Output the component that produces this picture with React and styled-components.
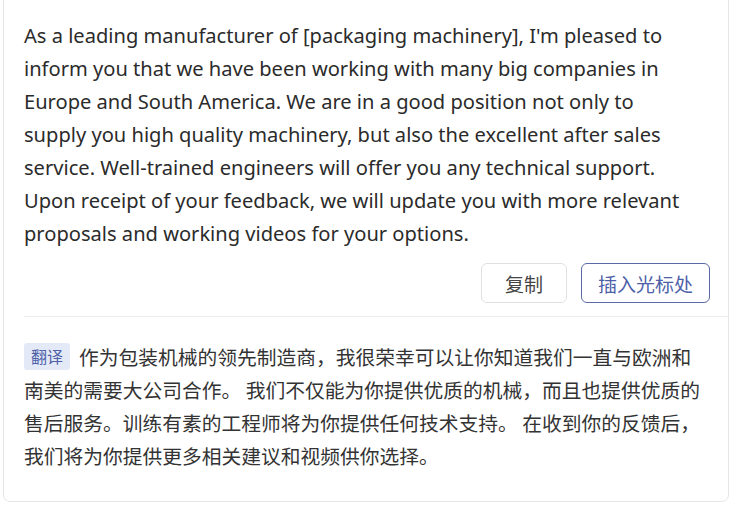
import styled, { createGlobalStyle } from "styled-components";

const GlobalStyle = createGlobalStyle`
  html, body {
    margin: 0;
    padding: 0;
    background: #fff;
  }
  body {
    font-family: "Noto Sans", "Noto Sans CJK SC", sans-serif;
    color: #2f2f2f;
  }
`;

const Card = styled.div`
  margin: -8px 0 0 3px;
  width: 726px;
  height: 510px;
  box-sizing: border-box;
  border: 1px solid #e6e6e6;
  border-radius: 7px;
  background: #fff;
  overflow: hidden;
`;

const Source = styled.div`
  padding: 26px 19px 0 20px;
  font-size: 20.1px;
  line-height: 33px;
  color: #2b2b2b;
`;

const Line = styled.div`
  white-space: nowrap;
`;

const Actions = styled.div`
  display: flex;
  justify-content: flex-end;
  gap: 14px;
  padding: 13px 18px 0 0;
`;

const Button = styled.button`
  height: 40px;
  padding: 0 ${({ $wide }) => ($wide ? "16px" : "23px")};
  box-sizing: border-box;
  border-radius: 6px;
  background: #fff;
  border: 1px solid ${({ $primary }) => ($primary ? "#5a6aa6" : "#e0e0e0")};
  color: ${({ $primary }) => ($primary ? "#4d60a8" : "#444")};
  font-family: "Noto Sans CJK SC", sans-serif;
  font-size: 19px;
  cursor: pointer;
`;

const Divider = styled.div`
  margin: 13px 0 0 20px;
  border-top: 1px solid #ececec;
`;

const Translation = styled.div`
  padding: 23px 19px 0 20px;
  font-family: "Noto Sans CJK SC", sans-serif;
  font-size: 19.75px;
  line-height: 33px;
  color: #333;
`;

const Badge = styled.span`
  display: inline-block;
  background: #e3e9f7;
  color: #4d60a8;
  font-size: 16px;
  line-height: 27px;
  padding: 0 7px;
  border-radius: 3px;
  margin-right: 9px;
  vertical-align: 2px;
`;

const english = [
  "As a leading manufacturer of [packaging machinery], I'm pleased to",
  "inform you that we have been working with many big companies in",
  "Europe and South America. We are in a good position not only to",
  "supply you high quality machinery, but also the excellent after sales",
  "service. Well-trained engineers will offer you any technical support.",
  "Upon receipt of your feedback, we will update you with more relevant",
  "proposals and working videos for your options.",
];

const chinese = [
  "南美的需要大公司合作。 我们不仅能为你提供优质的机械，而且也提供优质的",
  "售后服务。训练有素的工程师将为你提供任何技术支持。 在收到你的反馈后，",
  "我们将为你提供更多相关建议和视频供你选择。",
];

export default function App() {
  return (
    <>
      <GlobalStyle />
      <Card>
        <Source>
          {english.map((t) => (
            <Line key={t}>{t}</Line>
          ))}
        </Source>
        <Actions>
          <Button>复制</Button>
          <Button $primary $wide>
            插入光标处
          </Button>
        </Actions>
        <Divider />
        <Translation>
          <Line>
            <Badge>翻译</Badge>
            作为包装机械的领先制造商，我很荣幸可以让你知道我们一直与欧洲和
          </Line>
          {chinese.map((t) => (
            <Line key={t}>{t}</Line>
          ))}
        </Translation>
      </Card>
    </>
  );
}
